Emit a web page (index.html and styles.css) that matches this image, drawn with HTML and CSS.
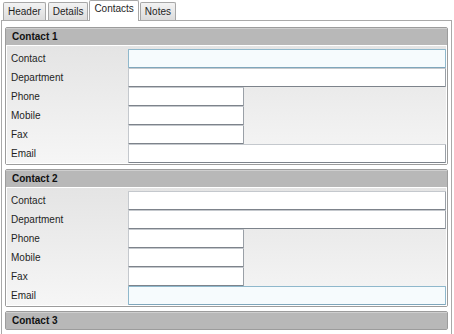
FILE: index.html
```html
<!DOCTYPE html>
<html lang="en">
<head>
    <meta charset="UTF-8">
    <title>Contacts</title>
    <link rel="stylesheet" href="styles.css">
</head>
<body>
    <div class="tabs">
        <div class="tab">Header</div>
        <div class="tab">Details</div>
        <div class="tab active">Contacts</div>
        <div class="tab">Notes</div>
    </div>

    <div class="panel">
        <!-- Contact 1 -->
        <div class="group">
            <div class="group-title">Contact 1</div>
            <div class="group-body">
                <label>Contact</label><input type="text" class="wide focus">
                <label>Department</label><input type="text" class="wide">
                <label>Phone</label><input type="text" class="short">
                <label>Mobile</label><input type="text" class="short">
                <label>Fax</label><input type="text" class="short">
                <label>Email</label><input type="text" class="wide">
            </div>
        </div>

        <!-- Contact 2 -->
        <div class="group">
            <div class="group-title">Contact 2</div>
            <div class="group-body">
                <label>Contact</label><input type="text" class="wide">
                <label>Department</label><input type="text" class="wide">
                <label>Phone</label><input type="text" class="short">
                <label>Mobile</label><input type="text" class="short">
                <label>Fax</label><input type="text" class="short">
                <label>Email</label><input type="text" class="wide focus">
            </div>
        </div>

        <!-- Contact 3 (collapsed) -->
        <div class="group">
            <div class="group-title">Contact 3</div>
        </div>
    </div>
</body>
</html>
```

FILE: styles.css
```css
body {
    font-family: 'Liberation Sans', Arial, sans-serif;
    font-size: 10px;
    color: #1e1e1e;
    background-color: #ffffff;
    margin: 0;
    height: 334px;
    overflow: hidden;
}
.tabs {
    display: flex;
    align-items: flex-end;
    height: 20px;
    padding-left: 3px;
}
.tab {
    height: 17px;
    line-height: 17px;
    padding: 0 4px;
    margin-right: 2px;
    border: 1px solid #a7a7a7;
    border-bottom: none;
    border-radius: 2px 2px 0 0;
    background: linear-gradient(#f3f3f3, #dcdcdc);
}
.tab.active {
    height: 20px;
    line-height: 16px;
    padding: 0 4px;
    margin: 0 1px 0 -1px;
    background: #ffffff;
    position: relative;
    top: 1px;
}
.panel {
    border: 1px solid #a9a9a9;
    border-bottom: none;
    margin: 0 0 0 1px;
    width: 451px;
    padding: 6px 3px 0 3px;
    box-sizing: border-box;
    height: 314px;
}
.group {
    border: 1px solid #9c9c9c;
    border-radius: 2px;
    margin-bottom: 4px;
}
.group-title {
    height: 16px;
    line-height: 16px;
    padding-left: 6px;
    font-weight: bold;
    color: #111;
    background-color: #b8b8b8;
    border-top: 1px solid #cfcfcf;
}
.group-body {
    display: grid;
    grid-template-columns: 117px 1fr;
    grid-auto-rows: 19px;
    align-items: center;
    padding: 4px 1px 1px 5px;
    background: linear-gradient(#e4e4e4, #f6f6f6);
    box-shadow: inset 0 0 0 1px #ffffff;
}
label {
    height: 19px;
    line-height: 19px;
}
input[type="text"] {
    height: 19px;
    box-sizing: border-box;
    margin: 0;
    padding: 0 3px;
    background: #ffffff;
    border: 1px solid #c4c8cd;
    border-bottom-color: #7d838b;
    border-right-color: #9aa0a7;
    border-radius: 1px;
}
input.wide {
    width: 100%;
}
input.short {
    width: 116px;
}
input.focus {
    border-color: #8fb8cc;
    border-bottom-color: #7fa6bb;
    background: #f6fbfd;
}
```
